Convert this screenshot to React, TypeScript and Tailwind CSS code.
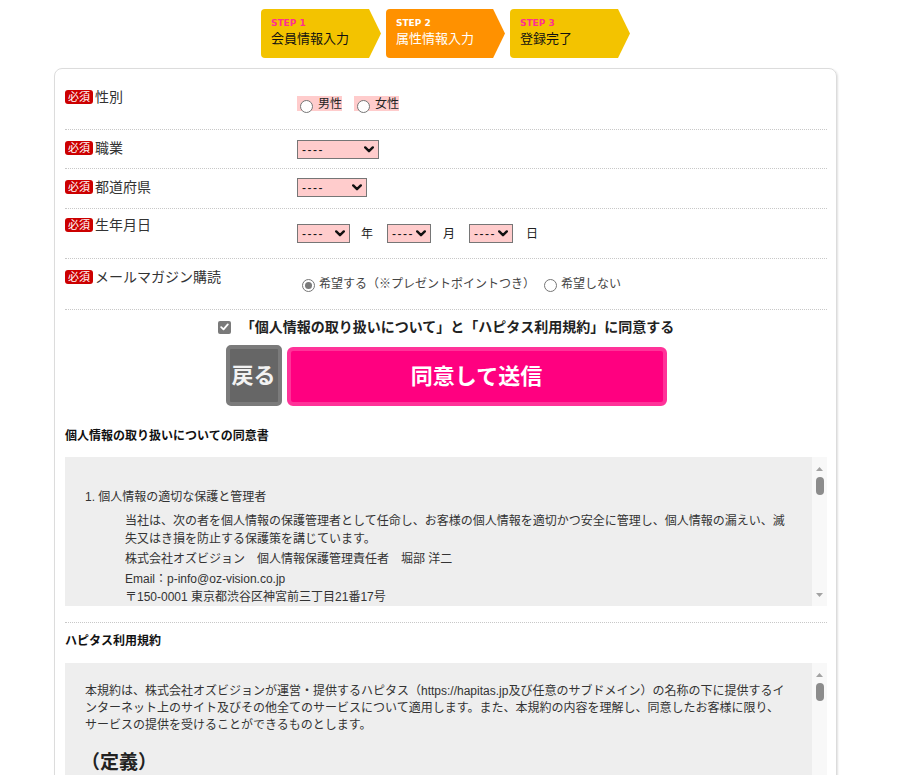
import React from 'react';

const steps = [
  { no: 'STEP 1', label: '会員情報入力', w: 'w-[120px]', bg: 'bg-[#f3c300]', stepColor: 'text-[#ff2f92]', textColor: 'text-[#111]' },
  { no: 'STEP 2', label: '属性情報入力', w: 'w-[119px]', bg: 'bg-[#ff9100]', stepColor: 'text-white', textColor: 'text-white' },
  { no: 'STEP 3', label: '登録完了', w: 'w-[120px]', bg: 'bg-[#f3c300]', stepColor: 'text-[#ff2f92]', textColor: 'text-[#111]' },
];

function Badge() {
  return (
    <span className="inline-flex items-center justify-center w-[28px] h-[14px] rounded-[3px] bg-[#cc0000] text-white text-[11px] leading-[14px]">
      必須
    </span>
  );
}

function Label({ text, pt }: { text: string; pt: string }) {
  return (
    <div className={`w-[232px] shrink-0 flex items-center ${pt}`}>
      <Badge />
      <span className="ml-[2px] text-[14px] leading-[16px] text-[#333]">{text}</span>
    </div>
  );
}

function Chevron() {
  return (
    <svg width="10" height="7" viewBox="0 0 10 7" className="shrink-0">
      <path d="M1.2 1.4 L5 5.2 L8.8 1.4" fill="none" stroke="#111" strokeWidth="2.4" strokeLinecap="round" strokeLinejoin="round" />
    </svg>
  );
}

function FakeSelect({ w }: { w: string }) {
  return (
    <div className={`${w} h-[19px] border border-[#767676] bg-[#ffcccc] flex items-center justify-between pl-[4px] pr-[4px]`}>
      <span className="text-[12px] leading-[12px] tracking-[1.5px] text-[#111]">----</span>
      <Chevron />
    </div>
  );
}

function Radio({ checked = false }: { checked?: boolean }) {
  return (
    <span className="flex items-center justify-center w-[13px] h-[13px] rounded-full border border-[#767676] bg-white shrink-0">
      {checked && <span className="w-[7px] h-[7px] rounded-full bg-[#7a7a7a]" />}
    </span>
  );
}

function ScrollTrack() {
  return (
    <div className="w-[15px] shrink-0 bg-[#f8f8f8] flex flex-col items-center relative">
      <svg width="7" height="4" viewBox="0 0 7 4" className="mt-[10px]">
        <path d="M0 4 L3.5 0 L7 4 Z" fill="#a3a3a3" />
      </svg>
      <div className="mt-[6px] w-[8px] h-[18px] rounded-full bg-[#8c8c8c]" />
      <svg width="7" height="4" viewBox="0 0 7 4" className="absolute bottom-[9px]">
        <path d="M0 0 L3.5 4 L7 0 Z" fill="#a3a3a3" />
      </svg>
    </div>
  );
}

export default function App() {
  return (
    <div className="w-[921px] h-[775px] overflow-hidden bg-white font-['Liberation_Sans','Noto_Sans_CJK_JP',sans-serif] text-[#333]">
      {/* ステップ */}
      <div className="pt-[9px] pl-[261px] flex gap-[5px]">
        {steps.map((s) => (
          <div
            key={s.no}
            className={`${s.w} h-[49px] ${s.bg} rounded-l-[4px] [clip-path:polygon(0_0,90%_0,100%_50%,90%_100%,0_100%)] pl-[10px] pt-[9px] flex flex-col`}
          >
            <span className={`font-['DejaVu_Sans',sans-serif] font-bold text-[9px] leading-[10px] ${s.stepColor}`}>{s.no}</span>
            <span className={`mt-[3px] text-[13px] leading-[15px] ${s.textColor}`}>{s.label}</span>
          </div>
        ))}
      </div>

      {/* フォーム */}
      <div className="mt-[10px] ml-[54px] w-[783px] h-[760px] border border-[#dcdcdc] rounded-[8px] shadow-[1px_1px_2px_rgba(0,0,0,0.12)] pl-[10px] pr-[9px]">
        {/* 性別 */}
        <div className="h-[61px] flex items-start border-b border-dotted border-[#c8c8c8]">
          <Label text="性別" pt="pt-[20px]" />
          <div className="pt-[27px] flex items-start gap-[12px]">
            <span className="h-[15px] bg-[#ffcccc] flex items-start pl-[3px]">
              <span className="mt-[4px] flex"><Radio /></span>
              <span className="ml-[5px] mt-[1px] text-[12px] leading-[15px] text-[#222]">男性</span>
            </span>
            <span className="h-[15px] bg-[#ffcccc] flex items-start pl-[3px]">
              <span className="mt-[4px] flex"><Radio /></span>
              <span className="ml-[5px] mt-[1px] text-[12px] leading-[15px] text-[#222]">女性</span>
            </span>
          </div>
        </div>

        {/* 職業 */}
        <div className="h-[39px] flex items-start border-b border-dotted border-[#c8c8c8]">
          <Label text="職業" pt="pt-[10px]" />
          <div className="pt-[10px]">
            <FakeSelect w="w-[82px]" />
          </div>
        </div>

        {/* 都道府県 */}
        <div className="h-[40px] flex items-start border-b border-dotted border-[#c8c8c8]">
          <Label text="都道府県" pt="pt-[10px]" />
          <div className="pt-[9px]">
            <FakeSelect w="w-[70px]" />
          </div>
        </div>

        {/* 生年月日 */}
        <div className="h-[50px] flex items-start border-b border-dotted border-[#c8c8c8]">
          <Label text="生年月日" pt="pt-[8px]" />
          <div className="pt-[15px] flex items-center text-[12px] text-[#222]">
            <FakeSelect w="w-[53px]" />
            <span className="ml-[11px]">年</span>
            <div className="ml-[14px]"><FakeSelect w="w-[44px]" /></div>
            <span className="ml-[12px]">月</span>
            <div className="ml-[14px]"><FakeSelect w="w-[44px]" /></div>
            <span className="ml-[13px]">日</span>
          </div>
        </div>

        {/* メールマガジン */}
        <div className="h-[51px] flex items-start border-b border-dotted border-[#c8c8c8]">
          <Label text="メールマガジン購読" pt="pt-[10px]" />
          <div className="pt-[20px] pl-[5px] flex items-center text-[12px] leading-[15px] text-[#444]">
            <Radio checked />
            <span className="ml-[4px] -mt-[3px]">希望する（※プレゼントポイントつき）</span>
            <span className="ml-[9px]"><Radio /></span>
            <span className="ml-[4px] -mt-[3px]">希望しない</span>
          </div>
        </div>

        {/* 同意チェック */}
        <div className="mt-[7px] h-[20px] flex items-center justify-center gap-[10px]">
          <span className="w-[13px] h-[13px] rounded-[2px] bg-[#7a7a7a] flex items-center justify-center">
            <svg width="9" height="8" viewBox="0 0 9 8">
              <path d="M1.2 4.2 L3.5 6.4 L7.8 1.4" fill="none" stroke="white" strokeWidth="1.8" strokeLinecap="round" strokeLinejoin="round" />
            </svg>
          </span>
          <span className="text-[14px] leading-[16px] font-bold text-[#222]">
            「個人情報の取り扱いについて」と「ハピタス利用規約」に同意する
          </span>
        </div>

        {/* ボタン */}
        <div className="mt-[8px] flex justify-center items-start gap-[5px]">
          <button className="w-[56px] h-[61px] rounded-[5px] bg-[#666] border-[4px] border-[#7b7b7b] text-[22px] font-bold text-[#f2f2f2] leading-none">
            戻る
          </button>
          <button className="mt-[2px] w-[380px] h-[59px] rounded-[6px] bg-[#ff0080] border-[4px] border-[#ff3399] text-[22px] font-bold text-white leading-none">
            同意して送信
          </button>
        </div>

        {/* 個人情報の取り扱い */}
        <div className="mt-[22px] text-[12px] leading-[16px] font-bold text-[#111]">個人情報の取り扱いについての同意書</div>
        <div className="mt-[13px] h-[149px] flex">
          <div className="flex-1 bg-[#eeeeee] overflow-hidden pl-[20px] pt-[31px] text-[12px] text-[#333]">
            <div className="leading-[18px] whitespace-nowrap">1. 個人情報の適切な保護と管理者</div>
            <div className="pl-[40px] mt-[6px] whitespace-nowrap">
              <div className="leading-[18px]">当社は、次の者を個人情報の保護管理者として任命し、お客様の個人情報を適切かつ安全に管理し、個人情報の漏えい、滅</div>
              <div className="leading-[18px]">失又はき損を防止する保護策を講じています。</div>
              <div className="leading-[18px] mt-[2px]">株式会社オズビジョン　個人情報保護管理責任者　堀部 洋二</div>
              <div className="leading-[18px] mt-[2px]">Email：p-info@oz-vision.co.jp</div>
              <div className="leading-[18px]">〒150-0001 東京都渋谷区神宮前三丁目21番17号</div>
            </div>
          </div>
          <ScrollTrack />
        </div>

        <div className="mt-[16px] border-t border-dotted border-[#c8c8c8]" />

        {/* ハピタス利用規約 */}
        <div className="mt-[10px] text-[12px] leading-[16px] font-bold text-[#111]">ハピタス利用規約</div>
        <div className="mt-[14px] h-[200px] flex">
          <div className="flex-1 bg-[#eeeeee] overflow-hidden pl-[20px] pt-[20px] text-[12px] text-[#333]">
            <div className="leading-[17px] whitespace-nowrap">本規約は、株式会社オズビジョンが運営・提供するハピタス（https://hapitas.jp及び任意のサブドメイン）の名称の下に提供するイ</div>
            <div className="leading-[17px] whitespace-nowrap">ンターネット上のサイト及びその他全てのサービスについて適用します。また、本規約の内容を理解し、同意したお客様に限り、</div>
            <div className="leading-[17px] whitespace-nowrap">サービスの提供を受けることができるものとします。</div>
            <div className="mt-[17px] -ml-[4px] text-[19px] leading-[24px] font-bold text-[#222]">（定義）</div>
          </div>
          <ScrollTrack />
        </div>
      </div>
    </div>
  );
}
